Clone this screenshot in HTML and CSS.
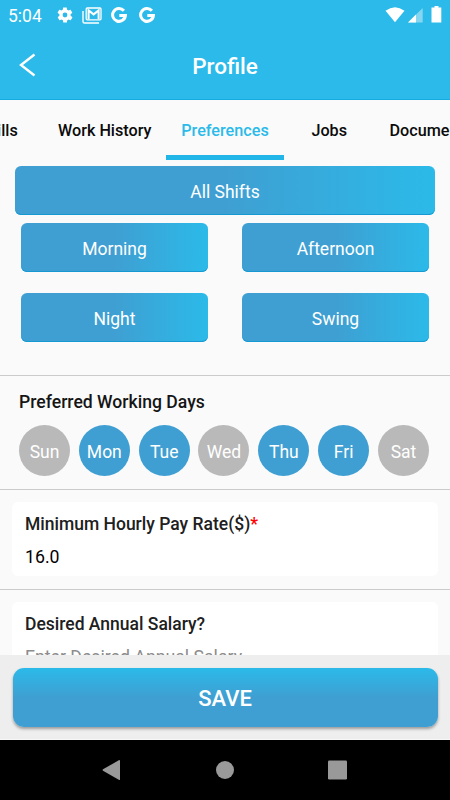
FILE: index.html
```html
<!DOCTYPE html>
<html lang="en">
<head>
<meta charset="utf-8">
<title>Profile</title>
<link rel="stylesheet" href="styles.css">
</head>
<body>
<div class="screen">
  <div class="status">
    <span class="clock">5:04</span>
    <svg class="gear" viewBox="0 0 24 24" width="18" height="18"><path fill="#fff" d="M19.4 13c0-.3.1-.6.1-1s0-.7-.1-1l2.1-1.6c.2-.2.3-.4.1-.7l-2-3.4c-.1-.2-.4-.3-.6-.2l-2.500 1c-.5-.4-1.100-.7-1.700-1l-.4-2.600c0-.3-.2-.5-.5-.5h-4c-.3 0-.5.200-.5.500l-.4 2.600c-.6.300-1.200.600-1.700 1l-2.500-1c-.2-.1-.5 0-.6.200l-2 3.400c-.1.300 0 .500.100.700L4.600 11c0 .3-.1.600-.1 1s0 .7.100 1l-2.100 1.600c-.2.200-.3.400-.1.700l2 3.400c.1.200.4.300.6.200l2.500-1c.5.400 1.100.7 1.700 1l.4 2.600c0 .3.200.5.500.5h4c.3 0 .5-.2.500-.5l.4-2.600c.6-.3 1.200-.6 1.700-1l2.500 1c.2.100.5 0 .6-.2l2-3.400c.1-.3 0-.5-.1-.7zM12 15.200a3.200 3.200 0 1 1 0-6.400 3.200 3.200 0 0 1 0 6.400z"/></svg>
    <svg class="mail" viewBox="0 0 20 17" width="20" height="17"><path d="M1 4v10.500q0 1.500 1.500 1.500H17" fill="none" stroke="#fff" stroke-width="1.400"/><rect x="4.200" y="1" width="14.800" height="11.800" rx="1" fill="none" stroke="#fff" stroke-width="1.300"/><path d="M6.600 12.300V3.400l5 4 5-4v8.900" fill="none" stroke="#fff" stroke-width="2"/></svg>
    <svg class="goog" viewBox="0 0 16 16" width="16" height="16"><path d="M12.900 3.800A6.400 6.400 0 1 0 14.400 8.500H8.300" fill="none" stroke="#fff" stroke-width="3"/></svg>
    <svg class="goog second" viewBox="0 0 16 16" width="16" height="16"><path d="M12.900 3.800A6.400 6.400 0 1 0 14.400 8.500H8.300" fill="none" stroke="#fff" stroke-width="3"/></svg>
    <svg class="signals" viewBox="0 0 58 18" width="58" height="18"><path fill="#fff" d="M.5 4.800Q10 -2.400 19.500 4.800L10 16.200z"/><path fill="#85d6f1" d="M37.700 2v14.500H23z"/><path fill="#fff" d="M31 8.500v8h-8z"/><path fill="#fff" d="M49.500 0h4v1.500h2.800v15h-9.800v-15h3z"/></svg>
  </div>
  <header class="header">
    <svg class="back" viewBox="0 0 18 24" width="18" height="24"><path d="M16.500 1.500 3 12l13.500 10.500" fill="none" stroke="#fff" stroke-width="2.400"/></svg>
    <h1>Profile</h1>
  </header>
  <nav class="tabs">
    <div class="tab">Skills</div>
    <div class="tab wide">Work History</div>
    <div class="tab active">Preferences</div>
    <div class="tab">Jobs</div>
    <div class="tab">Documents</div>
  </nav>
  <main class="content">
    <section class="shifts">
      <div class="shift all">All Shifts</div>
      <div class="grid">
        <div class="shift">Morning</div>
        <div class="shift">Afternoon</div>
        <div class="shift">Night</div>
        <div class="shift">Swing</div>
      </div>
    </section>
    <section class="days">
      <h2>Preferred Working Days</h2>
      <div class="row">
        <div class="day">Sun</div>
        <div class="day on">Mon</div>
        <div class="day on">Tue</div>
        <div class="day">Wed</div>
        <div class="day on">Thu</div>
        <div class="day on">Fri</div>
        <div class="day">Sat</div>
      </div>
    </section>
    <section class="field">
      <div class="card">
        <div class="label">Minimum Hourly Pay Rate($)<span class="req">*</span></div>
        <div class="value">16.0</div>
      </div>
    </section>
    <section class="field">
      <div class="card">
        <div class="label">Desired Annual Salary?</div>
        <div class="value hint">Enter Desired Annual Salary</div>
      </div>
    </section>
  </main>
  <footer class="footer">
    <div class="save">SAVE</div>
  </footer>
  <div class="navbar">
    <svg viewBox="0 0 20 20" width="20" height="20"><path fill="#999" d="M18 .5v19q0 .8-.8.400L1 10.700q-.8-.7 0-1.400L17.200.1q.8-.3.800.4z"/></svg>
    <svg viewBox="0 0 20 20" width="20" height="20"><circle cx="10" cy="10" r="9" fill="#999"/></svg>
    <svg viewBox="0 0 20 20" width="20" height="20"><rect x="1" y=".5" width="19" height="19" rx="1.200" fill="#999"/></svg>
  </div>
</div>
</body>
</html>
```
FILE: styles.css
```css
* { box-sizing: border-box; }
body { margin: 0; font-family: Roboto, "Liberation Sans", sans-serif; }
.screen {
  width: 450px;
  height: 800px;
  overflow: hidden;
  display: flex;
  flex-direction: column;
  background: #fafafa;
}
.status {
  flex: none;
  height: 30px;
  display: flex;
  align-items: center;
  padding: 0 7px 0 8px;
  background: #2bbae9;
  color: #fff;
}
.clock { width: 48px; font-size: 17.500px; line-height: 30px; padding-top: 1px; }
.mail { margin-left: 8px; }
.goog { margin-left: 9px; }
.second { margin-left: 12px; }
.signals { margin-left: auto; margin-bottom: 1px; }
.header {
  flex: none;
  height: 70px;
  display: grid;
  grid-template-columns: 60px 1fr 60px;
  align-items: center;
  padding-bottom: 4px;
  background: #2bbae9;
  border-bottom: 1px solid #16acdf;
  color: #fff;
}
.back { margin-left: 18px; margin-top: 5px; }
h1 { margin: 7px 0 0; font-size: 22.500px; line-height: 28px; font-weight: 500; text-align: center; }
.tabs { flex: none; height: 60px; display: flex; margin-left: -47px; }
.tab {
  flex: none;
  min-width: 90.500px;
  padding: 0 15px;
  text-align: center;
  font-size: 16.200px;
  line-height: 61px;
  font-weight: 500;
  white-space: nowrap;
  color: #0b0b0b;
}
.tab:first-child { padding: 0 14px; }
.wide { width: 122.500px; padding: 0 14px; }
.active { width: 118px; padding: 0 14px; color: #2bbae9; box-shadow: inset 0 -5px #22b5e8; }
.content { flex: 1; min-height: 0; overflow: hidden; }
.shifts { height: 216px; padding: 6px 15px 0; border-bottom: 1px solid #cbcbcb; }
.shift {
  height: 49px;
  display: flex;
  align-items: center;
  justify-content: center;
  border-radius: 6px;
  background: linear-gradient(90deg, #3f9fd2 0%, #3f9fd2 50%, #2bbae9 100%);
  box-shadow: inset 0 -1px #1599d3;
  color: #fff;
  font-size: 17.500px;
  padding-top: 3px;
}
.grid { display: grid; grid-template-columns: 187px 187px; gap: 21px 34px; margin: 8px 6px 0; }
.days { height: 114px; padding: 14px 19px 0; border-bottom: 1px solid #cbcbcb; }
h2 { margin: 0; font-size: 17.600px; line-height: 24px; font-weight: 500; color: #151515; }
.row { display: flex; justify-content: space-between; margin: 11px 2px 0 0; }
.day {
  width: 51px;
  height: 51px;
  border-radius: 50%;
  background: #b9b9b9;
  color: #fff;
  font-size: 17.500px;
  line-height: 54px;
  text-align: center;
}
.on { background: #3f9fd2; }
.field { height: 100px; padding: 12px; border-bottom: 1px solid #cbcbcb; }
.card { height: 74px; padding: 10px 13px; border-radius: 6px; background: #fff; }
.label { font-size: 17.500px; line-height: 24px; font-weight: 500; color: #202020; }
.req { color: #f00; }
.value { font-size: 17.700px; line-height: 24px; margin-top: 9px; color: #000; }
.hint { color: #8c8c8c; white-space: nowrap; }
.footer { flex: none; height: 85px; padding: 13px 12.500px 0; background: #eee; border-bottom: 1px solid #f7f7f7; }
.save {
  height: 59px;
  border-radius: 11px;
  background: linear-gradient(180deg, #2bbae9 0%, #3f9fd2 50%, #3f9fd2 100%);
  box-shadow: 0 2px 3px rgba(0, 0, 0, 0.35);
  color: #fff;
  font-size: 22px;
  line-height: 62px;
  font-weight: 500;
  text-align: center;
}
.navbar { flex: none; height: 60px; background: #000; display: flex; align-items: center; justify-content: space-between; padding: 0 103px 0 102px; }
```
